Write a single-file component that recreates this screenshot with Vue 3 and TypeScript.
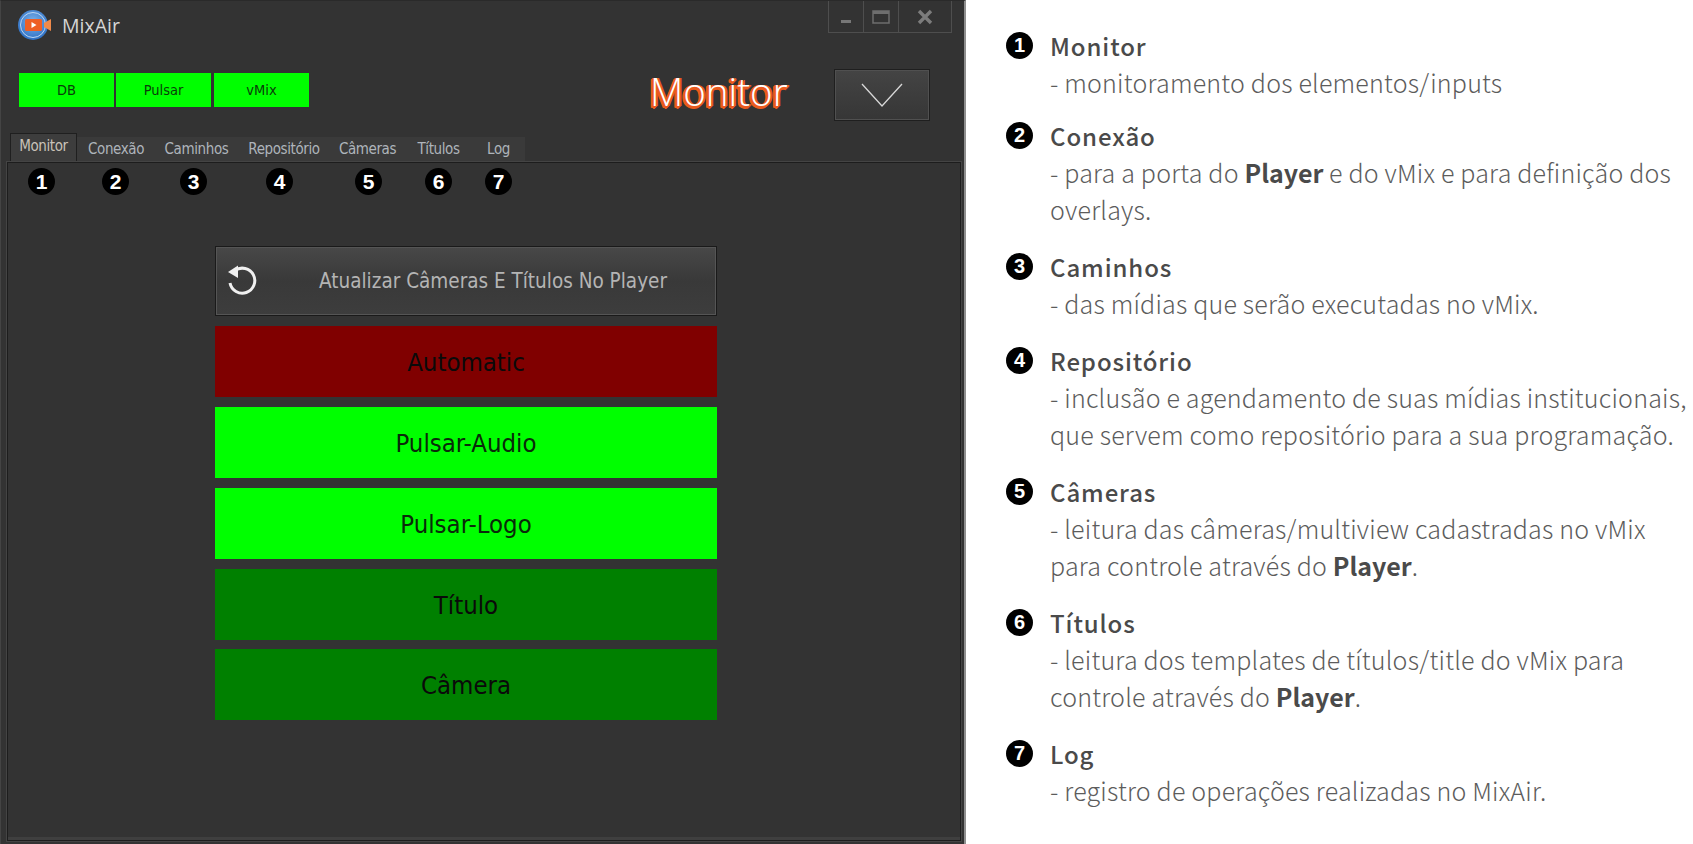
<script setup lang="ts">
const tabs = [
  { label: 'Monitor', w: 67, active: true },
  { label: 'Conexão', w: 78 },
  { label: 'Caminhos', w: 83 },
  { label: 'Repositório', w: 92 },
  { label: 'Câmeras', w: 75 },
  { label: 'Títulos', w: 67 },
  { label: 'Log', w: 53 },
]
const marks = [
  { n: 1, gap: 0 },
  { n: 2, gap: 47 },
  { n: 3, gap: 51 },
  { n: 4, gap: 59 },
  { n: 5, gap: 62 },
  { n: 6, gap: 43 },
  { n: 7, gap: 33 },
]
const statuses = ['DB', 'Pulsar', 'vMix']
const actions = [
  { label: 'Automatic', cls: 'red' },
  { label: 'Pulsar-Audio', cls: 'lime' },
  { label: 'Pulsar-Logo', cls: 'lime' },
  { label: 'Título', cls: 'green' },
  { label: 'Câmera', cls: 'green' },
]
</script>

<template>
  <div class="page">
    <section class="window">
      <header class="titlebar">
        <div class="brand">
          <svg width="36" height="34" viewBox="0 0 36 34">
            <defs>
              <radialGradient id="lg" cx="50%" cy="40%" r="60%">
                <stop offset="0" stop-color="#7fb4ea" />
                <stop offset="1" stop-color="#2d6fc4" />
              </radialGradient>
            </defs>
            <circle cx="15" cy="17" r="15" fill="url(#lg)" />
            <circle cx="15" cy="17" r="12.5" fill="none" stroke="#bcd6f2" stroke-width="1" />
            <rect x="7" y="11" width="17" height="12" rx="1.5" fill="#ee5f25" />
            <path d="M13.5 14 L18.5 17 L13.5 20 Z" fill="#fff" />
            <path d="M26 15 L33 11 V23 L26 19 Z" fill="#f08a4a" />
          </svg>
          <span class="brand-name">MixAir</span>
        </div>
        <div class="controls">
          <div class="ctl"><svg width="14" height="14" viewBox="0 0 14 14"><rect x="2" y="10" width="10" height="3" fill="#777" /></svg></div>
          <div class="ctl"><svg width="20" height="18" viewBox="0 0 20 18"><rect x="2" y="3" width="16" height="12" fill="none" stroke="#6e6e6e" stroke-width="1.5" /><rect x="2" y="3" width="16" height="3" fill="#6e6e6e" /></svg></div>
          <div class="ctl wide"><svg width="18" height="18" viewBox="0 0 18 18"><path d="M3 3 L15 15 M15 3 L3 15" stroke="#7c7c7c" stroke-width="3.4" /></svg></div>
        </div>
      </header>

      <div class="statusrow">
        <div class="statuses">
          <div v-for="s in statuses" :key="s" class="status">{{ s }}</div>
        </div>
        <div class="title-big">Monitor</div>
        <button class="drop">
          <svg width="44" height="28" viewBox="0 0 44 28"><path d="M2 3 L22 25 L42 3" fill="none" stroke="#d8d8d8" stroke-width="1.3" /></svg>
        </button>
      </div>

      <nav class="tabs">
        <div v-for="t in tabs" :key="t.label" class="tab" :class="{ active: t.active }" :style="{ width: t.w + 'px' }">{{ t.label }}</div>
      </nav>

      <div class="panel">
        <div class="marks">
          <span v-for="m in marks" :key="m.n" class="badge" :style="{ marginLeft: m.gap + 'px' }">{{ m.n }}</span>
        </div>
        <div class="stack">
          <button class="refresh">
            <svg class="refresh-ico" width="34" height="34" viewBox="0 0 34 34">
              <path d="M10 7.5 A12.5 12.5 0 1 1 5 20" fill="none" stroke="#f0f0f0" stroke-width="3" />
              <path d="M3 9 L13 2.5 L13 15 Z" fill="#f0f0f0" />
            </svg>
            <span>Atualizar Câmeras E Títulos No Player</span>
          </button>
          <div v-for="a in actions" :key="a.label" class="action" :class="a.cls">{{ a.label }}</div>
        </div>
      </div>
    </section>

    <aside class="notes">
      <div class="note">
        <span class="nb">1</span>
        <div class="nt"><h3>Monitor</h3><p>- monitoramento dos elementos/inputs</p></div>
      </div>
      <div class="note">
        <span class="nb">2</span>
        <div class="nt"><h3>Conexão</h3><p>- para a porta do <b>Player</b> e do vMix e para definição dos overlays.</p></div>
      </div>
      <div class="note">
        <span class="nb">3</span>
        <div class="nt"><h3>Caminhos</h3><p>- das mídias que serão executadas no vMix.</p></div>
      </div>
      <div class="note">
        <span class="nb">4</span>
        <div class="nt"><h3>Repositório</h3><p>- inclusão e agendamento de suas mídias institucionais, que servem como repositório para a sua programação.</p></div>
      </div>
      <div class="note">
        <span class="nb">5</span>
        <div class="nt"><h3>Câmeras</h3><p>- leitura das câmeras/multiview cadastradas no vMix para controle através do <b>Player</b>.</p></div>
      </div>
      <div class="note">
        <span class="nb">6</span>
        <div class="nt"><h3>Títulos</h3><p>- leitura dos templates de títulos/title do vMix para controle através do <b>Player</b>.</p></div>
      </div>
      <div class="note">
        <span class="nb">7</span>
        <div class="nt"><h3>Log</h3><p>- registro de operações realizadas no MixAir.</p></div>
      </div>
    </aside>
  </div>
</template>

<style scoped>
.page {
  display: flex;
  width: 1693px;
  height: 844px;
  overflow: hidden;
  background: #fff;
}
.window {
  width: 966px;
  height: 844px;
  box-sizing: border-box;
  flex: none;
  background: #333;
  border-right: 2px solid #8f8f8f;
  border-left: 1px solid #444;
  border-top: 1px solid #2a2a2a;
  display: flex;
  flex-direction: column;
  font-family: "DejaVu Sans", sans-serif;
}
.titlebar {
  height: 72px;
  flex: none;
  display: flex;
  justify-content: space-between;
  align-items: flex-start;
  padding: 0 12px 0 17px;
}
.brand {
  display: flex;
  align-items: center;
  gap: 8px;
  padding-top: 7px;
}
.brand-name {
  color: #d6d6d6;
  font: 19.5px "Open Sans", sans-serif;
}
.controls {
  display: flex;
  border: 1px solid #4e4e4e;
  border-top: 0;
  height: 31px;
}
.ctl {
  width: 35px;
  box-sizing: border-box;
  display: flex;
  align-items: center;
  justify-content: center;
  border-right: 1px solid #4e4e4e;
}
.ctl.wide {
  width: 52px;
  border-right: 0;
}
.statusrow {
  height: 60px;
  flex: none;
  display: flex;
  align-items: flex-start;
  padding-left: 18px;
}
.statuses {
  display: flex;
  gap: 2px;
  width: 631px;
  flex: none;
}
.status {
  width: 95px;
  height: 34px;
  background: #0f0;
  color: #0a3d0a;
  font: 14.5px/34px "DejaVu Sans", sans-serif;
  font-stretch: condensed;
  text-align: center;
}
.status:last-child {
  margin-left: 1px;
}
.title-big {
  width: 184px;
  flex: none;
  margin-top: -10px;
  font: 300 38.5px/56px "Open Sans", sans-serif;
  color: #fff;
  text-shadow: -1px 0 #ea5a1e, -2px 1px #ea5a1e, -1px 1px #ea5a1e, 1px 1px #ea5a1e, 2px 0 #ea5a1e, -2px 0 #ea5a1e, 0 2px #ea5a1e, -2px 2px #ea5a1e, -3px 1px #ea5a1e, -3px 2px #ea5a1e, -1px 3px #ea5a1e;
}
.drop {
  width: 96px;
  height: 52px;
  margin-top: -4px;
  box-sizing: border-box;
  border: 1px solid #1f1f1f;
  outline: 1px solid #505050;
  outline-offset: -2px;
  background: linear-gradient(#444, #363636);
  display: flex;
  align-items: center;
  justify-content: center;
  padding: 0;
}
.tabs {
  height: 29px;
  flex: none;
  display: flex;
  align-items: flex-end;
  padding-left: 9px;
}
.tab {
  height: 25px;
  box-sizing: border-box;
  background: #3a3a3a;
  color: #aeb4bb;
  font: 15px/24px "DejaVu Sans", sans-serif;
  font-stretch: condensed;
  letter-spacing: -0.4px;
  text-align: center;
}
.tab.active {
  height: 29px;
  background: #3d3d3d;
  border: 1px solid #1f1f1f;
  border-bottom: 0;
  color: #c9c2b8;
  line-height: 24px;
}
.panel {
  flex: 1;
  margin: 0 3px 3px 6px;
  border: 1px solid #1d1d1d;
  box-shadow: inset 0 -3px #3f3f3f, 0 0 0 1px #444;
  display: flex;
  flex-direction: column;
  align-items: flex-start;
}
.marks {
  display: flex;
  padding: 5px 0 0 20px;
  height: 27px;
}
.badge, .nb {
  width: 27px;
  height: 27px;
  border-radius: 50%;
  background: #000;
  color: #fff;
  font: 700 21px/27px "Liberation Sans", sans-serif;
  text-align: center;
  display: block;
  flex: none;
}
.stack {
  width: 502px;
  margin: 51px 0 0 207px;
  display: flex;
  flex-direction: column;
  gap: 10px;
}
.refresh {
  height: 70px;
  box-sizing: border-box;
  border: 1px solid #1a1a1a;
  outline: 1px solid #555;
  outline-offset: -2px;
  background: linear-gradient(#484848, #393939 50%, #3d3d3d);
  color: #b4b4b4;
  font: 20.5px "DejaVu Sans", sans-serif;
  font-stretch: condensed;
  padding: 0 0 0 54px;
  position: relative;
}
.refresh-ico {
  position: absolute;
  left: 9px;
  top: 16px;
}
.action {
  height: 71px;
  text-align: center;
  font: 25.5px/73px "DejaVu Sans", sans-serif;
  font-stretch: condensed;
  color: #0a0a0a;
}
.action:last-child {
  margin-top: -1px;
}
.action.red { background: #800000; }
.action.lime { background: #0f0; color: #0a2a0a; }
.action.green { background: #008000; }
.notes {
  flex: 1;
  padding: 27px 0 0 38px;
  display: flex;
  flex-direction: column;
  gap: 20px;
  font-family: "Noto Sans CJK KR", "Noto Sans", sans-serif;
  color: #5c5c5c;
}
.note {
  display: flex;
  gap: 17px;
  padding-left: 2px;
}
.note:first-child {
  margin-bottom: -4px;
}
.nb {
  font-size: 20px;
  margin-top: 5px;
}
.nt {
  width: 640px;
}
.nt h3 {
  margin: 0;
  font-size: 24px;
  font-weight: 500;
  line-height: 37px;
  letter-spacing: 0.9px;
  color: #4a4a4a;
}
.nt p {
  margin: 0;
  font-size: 25px;
  font-weight: 300;
  line-height: 37px;
  letter-spacing: 0.2px;
}
.nt b {
  font-weight: 700;
  letter-spacing: 0;
  color: #4a4a4a;
}
</style>
